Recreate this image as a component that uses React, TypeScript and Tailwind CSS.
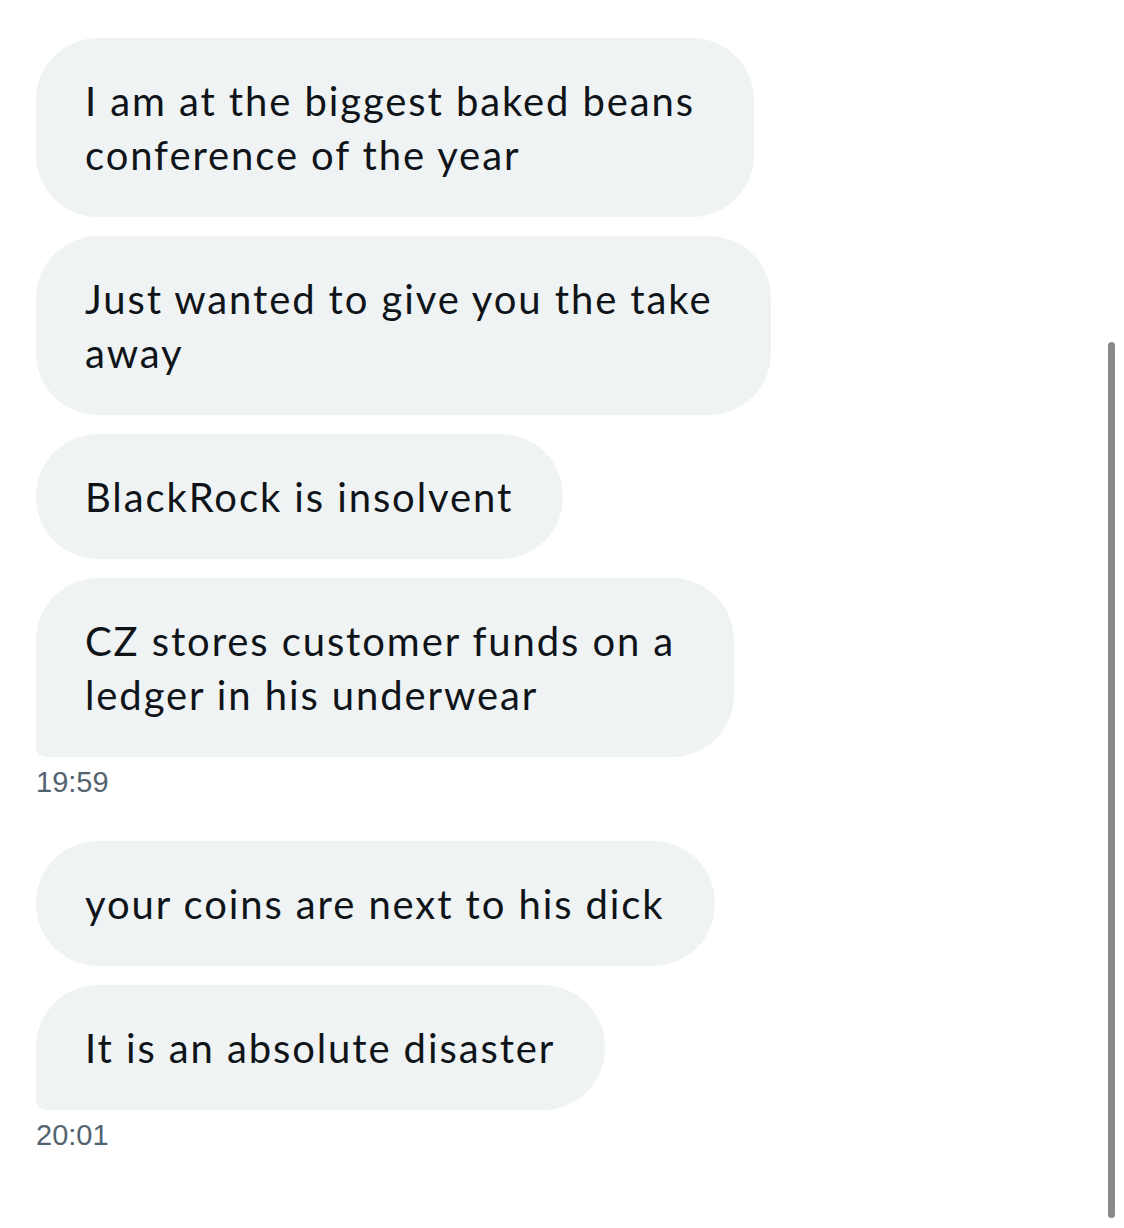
import React from "react";

type Msg = { lines: string[]; last?: boolean; time?: string };

const groups: { msgs: Msg[]; time: string }[] = [
  {
    msgs: [
      { lines: ["I am at the biggest baked beans", "conference of the year"] },
      { lines: ["Just wanted to give you the take", "away"] },
      { lines: ["BlackRock is insolvent"] },
      { lines: ["CZ stores customer funds on a", "ledger in his underwear"], last: true },
    ],
    time: "19:59",
  },
  {
    msgs: [
      { lines: ["your coins are next to his dick"] },
      { lines: ["It is an absolute disaster"], last: true },
    ],
    time: "20:01",
  },
];

function Bubble({ m }: { m: Msg }) {
  const multi = m.lines.length > 1;
  return (
    <div
      className={
        "w-fit bg-[#eff3f4] text-[#0f1419] text-[40px] leading-[54px] tracking-[1.9px] pt-[36px] pb-[35px] pl-[49px] rounded-[62px] " +
        (multi ? "pr-[59px] " : "pr-[50px] ") +
        (m.last ? "rounded-bl-[10px]" : "")
      }
      style={{ fontFamily: "Lato, 'Noto Sans', sans-serif" }}
    >
      {m.lines.map((l, i) => (
        <div key={i} className="whitespace-nowrap">
          {l}
        </div>
      ))}
    </div>
  );
}

export default function App() {
  return (
    <div className="relative w-[1124px] h-[1228px] bg-white overflow-hidden">
      <div className="flex flex-col pl-[36px] pt-[38px] gap-[42px]">
        {groups.map((g, gi) => (
          <div key={gi} className="flex flex-col">
            <div className="flex flex-col gap-[19px]">
              {g.msgs.map((m, i) => (
                <Bubble key={i} m={m} />
              ))}
            </div>
            <div
              className="mt-[8px] text-[29px] leading-[34px] text-[#536471]"
              style={{ fontFamily: "'Liberation Sans', Arial, sans-serif" }}
            >
              {g.time}
            </div>
          </div>
        ))}
      </div>
      <div className="absolute left-[1108px] top-[342px] w-[7px] h-[876px] rounded-full bg-[#8a8a8a]" />
    </div>
  );
}
